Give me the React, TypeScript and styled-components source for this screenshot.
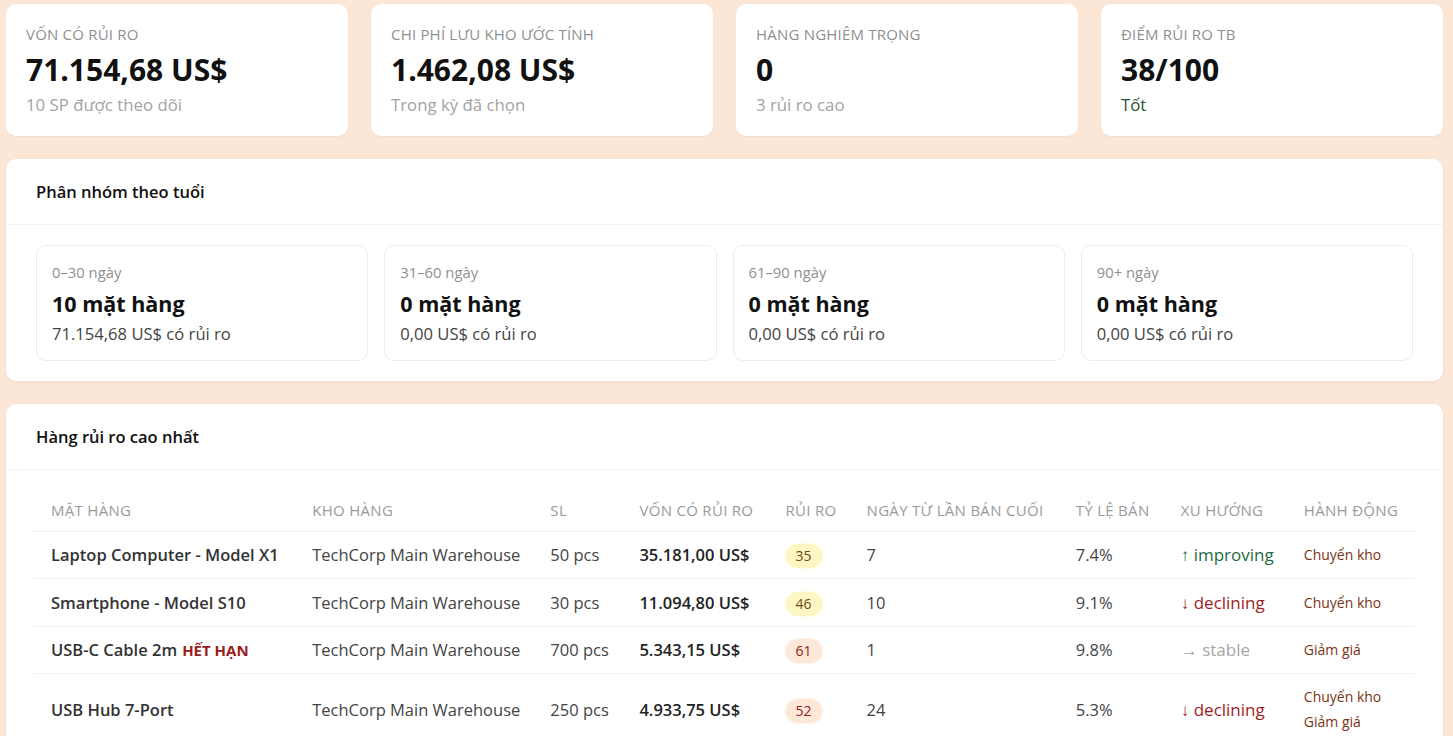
import React from 'react'
import styled, { createGlobalStyle } from 'styled-components'

const GlobalStyle = createGlobalStyle`
  html, body {
    margin: 0;
    padding: 0;
    background: #fce6d6;
  }
  body {
    font-family: 'Open Sans', 'Noto Sans', Arial, sans-serif;
    color: #222;
    overflow: hidden;
  }
`

const Page = styled.div`
  display: flex;
  flex-direction: column;
  gap: 23px;
  padding: 4px 10px 0 6px;
  box-sizing: border-box;
  width: 1453px;
`

const KpiGrid = styled.div`
  display: grid;
  grid-template-columns: repeat(4, 1fr);
  gap: 23px;
`

const KpiCard = styled.div`
  background: #fff;
  border-radius: 10px;
  padding: 20px 20px 19px;
  box-shadow: 0 1px 2px rgba(120, 70, 30, 0.06);
`

const KpiLabel = styled.div`
  font-size: 15px;
  line-height: 20px;
  letter-spacing: 0.2px;
  color: #8f8f8f;
  text-transform: uppercase;
`

const KpiValue = styled.div`
  font-size: 30px;
  line-height: 36px;
  font-weight: 700;
  color: #111;
  margin-top: 8px;
`

const KpiSub = styled.div<{ $tone?: 'good' }>`
  font-size: 16.8px;
  line-height: 24px;
  margin-top: 5px;
  color: ${(p) => (p.$tone === 'good' ? '#1f5130' : '#a3a3a3')};
`

const Section = styled.section`
  background: #fff;
  border-radius: 10px;
  box-shadow: 0 1px 3px rgba(120, 70, 30, 0.08);
`

const SectionHeader = styled.div`
  height: 65px;
  display: flex;
  align-items: center;
  padding: 0 30px;
  border-bottom: 1px solid #f3f3f3;
`

const SectionTitle = styled.h2`
  margin: 0;
  font-size: 16.5px;
  font-weight: 600;
  color: #111;
`

const SectionBody = styled.div`
  padding: 20px 30px 20px;
`

const AgingGrid = styled.div`
  display: grid;
  grid-template-columns: repeat(4, 1fr);
  gap: 16px;
`

const AgingCard = styled.div`
  border: 1px solid #ececec;
  border-radius: 10px;
  padding: 16px 15px 15px;
`

const AgingLabel = styled.div`
  font-size: 14.8px;
  line-height: 20px;
  color: #8f8f8f;
`

const AgingValue = styled.div`
  font-size: 21.5px;
  line-height: 30px;
  font-weight: 700;
  color: #111;
  margin-top: 7px;
`

const AgingSub = styled.div`
  font-size: 16.6px;
  line-height: 22px;
  color: #444;
  margin-top: 4px;
`

const TableBody = styled.div`
  padding: 20px 28px 0 28px;
`

const Table = styled.table`
  width: 100%;
  border-collapse: collapse;
  table-layout: fixed;
`

const Th = styled.th`
  text-align: left;
  font-size: 15px;
  font-weight: 500;
  color: #9a9a9a;
  text-transform: uppercase;
  letter-spacing: 0.3px;
  padding: 10px 17px;
  height: 41px;
  box-sizing: border-box;
  border-bottom: 1px solid #f0f0f0;
  white-space: nowrap;
`

const Td = styled.td<{ $strong?: boolean }>`
  font-size: 16.5px;
  line-height: 25px;
  padding: 10px 17px;
  color: ${(p) => (p.$strong ? '#222' : '#444')};
  font-weight: ${(p) => (p.$strong ? 600 : 400)};
  border-bottom: 1px solid #f0f0f0;
  white-space: nowrap;
  vertical-align: middle;
`

const ItemName = styled.span`
  font-weight: 600;
  color: #333;
`

const Expired = styled.span`
  margin-left: 5px;
  font-size: 15px;
  font-weight: 700;
  color: #9b1c1c;
`

const RiskBadge = styled.span<{ $level: 'mid' | 'high' }>`
  display: inline-block;
  min-width: 36px;
  height: 24px;
  line-height: 24px;
  vertical-align: middle;
  text-align: center;
  border-radius: 12px;
  font-size: 14px;
  font-weight: 500;
  background: ${(p) => (p.$level === 'mid' ? '#fef7c3' : '#fde7d6')};
  color: ${(p) => (p.$level === 'mid' ? '#6b4a0f' : '#8f1d1d')};
  box-shadow: 0 0 3px ${(p) => (p.$level === 'mid' ? '#fef7c3' : '#fde7d6')};
`

const Trend = styled.span<{ $dir: 'improving' | 'declining' | 'stable' }>`
  font-size: 17px;
  color: ${(p) =>
    p.$dir === 'improving' ? '#1c6b43' : p.$dir === 'declining' ? '#a11d1d' : '#a6a6a6'};
`

const ActionList = styled.div`
  display: flex;
  flex-direction: column;
`

const ActionLink = styled.span`
  font-size: 14px;
  line-height: 25px;
  color: #7a3312;
`

type KpiType = { label: string; value: string; sub: string; tone?: 'good' }

const kpis: KpiType[] = [
  { label: 'Vốn có rủi ro', value: '71.154,68 US$', sub: '10 SP được theo dõi' },
  { label: 'Chi phí lưu kho ước tính', value: '1.462,08 US$', sub: 'Trong kỳ đã chọn' },
  { label: 'Hàng nghiêm trọng', value: '0', sub: '3 rủi ro cao' },
  { label: 'Điểm rủi ro TB', value: '38/100', sub: 'Tốt', tone: 'good' },
]

const buckets = [
  { label: '0–30 ngày', count: '10 mặt hàng', value: '71.154,68 US$ có rủi ro' },
  { label: '31–60 ngày', count: '0 mặt hàng', value: '0,00 US$ có rủi ro' },
  { label: '61–90 ngày', count: '0 mặt hàng', value: '0,00 US$ có rủi ro' },
  { label: '90+ ngày', count: '0 mặt hàng', value: '0,00 US$ có rủi ro' },
]

type RowType = {
  name: string
  expired?: boolean
  qty: string
  capital: string
  risk: number
  days: string
  rate: string
  trend: 'improving' | 'declining' | 'stable'
  actions: string[]
}

const rows: RowType[] = [
  { name: 'Laptop Computer - Model X1', qty: '50 pcs', capital: '35.181,00 US$', risk: 35, days: '7', rate: '7.4%', trend: 'improving', actions: ['Chuyển kho'] },
  { name: 'Smartphone - Model S10', qty: '30 pcs', capital: '11.094,80 US$', risk: 46, days: '10', rate: '9.1%', trend: 'declining', actions: ['Chuyển kho'] },
  { name: 'USB-C Cable 2m', expired: true, qty: '700 pcs', capital: '5.343,15 US$', risk: 61, days: '1', rate: '9.8%', trend: 'stable', actions: ['Giảm giá'] },
  { name: 'USB Hub 7-Port', qty: '250 pcs', capital: '4.933,75 US$', risk: 52, days: '24', rate: '5.3%', trend: 'declining', actions: ['Chuyển kho', 'Giảm giá'] },
]

const trendArrow = { improving: '↑', declining: '↓', stable: '→' }

const colWidths = [261, 238, 89, 146, 81, 209, 105, 123, 128]
const headers = ['Mặt hàng', 'Kho hàng', 'SL', 'Vốn có rủi ro', 'Rủi ro', 'Ngày từ lần bán cuối', 'Tỷ lệ bán', 'Xu hướng', 'Hành động']

const App = () => {
  return (
    <>
      <GlobalStyle />
      <Page>
        <KpiGrid>
          {kpis.map((k) => (
            <KpiCard key={k.label}>
              <KpiLabel>{k.label}</KpiLabel>
              <KpiValue>{k.value}</KpiValue>
              <KpiSub $tone={k.tone}>{k.sub}</KpiSub>
            </KpiCard>
          ))}
        </KpiGrid>

        <Section>
          <SectionHeader>
            <SectionTitle>Phân nhóm theo tuổi</SectionTitle>
          </SectionHeader>
          <SectionBody>
            <AgingGrid>
              {buckets.map((b) => (
                <AgingCard key={b.label}>
                  <AgingLabel>{b.label}</AgingLabel>
                  <AgingValue>{b.count}</AgingValue>
                  <AgingSub>{b.value}</AgingSub>
                </AgingCard>
              ))}
            </AgingGrid>
          </SectionBody>
        </Section>

        <Section>
          <SectionHeader>
            <SectionTitle>Hàng rủi ro cao nhất</SectionTitle>
          </SectionHeader>
          <TableBody>
            <Table>
              <colgroup>
                {colWidths.map((w, i) => (
                  <col key={i} style={{ width: w }} />
                ))}
              </colgroup>
              <thead>
                <tr>
                  {headers.map((h) => (
                    <Th key={h}>{h}</Th>
                  ))}
                </tr>
              </thead>
              <tbody>
                {rows.map((r) => (
                  <tr key={r.name}>
                    <Td>
                      <ItemName>{r.name}</ItemName>
                      {r.expired && <Expired>HẾT HẠN</Expired>}
                    </Td>
                    <Td>TechCorp Main Warehouse</Td>
                    <Td>{r.qty}</Td>
                    <Td $strong>{r.capital}</Td>
                    <Td>
                      <RiskBadge $level={r.risk > 50 ? 'high' : 'mid'}>{r.risk}</RiskBadge>
                    </Td>
                    <Td>{r.days}</Td>
                    <Td>{r.rate}</Td>
                    <Td>
                      <Trend $dir={r.trend}>
                        {trendArrow[r.trend]} {r.trend}
                      </Trend>
                    </Td>
                    <Td>
                      <ActionList>
                        {r.actions.map((a) => (
                          <ActionLink key={a}>{a}</ActionLink>
                        ))}
                      </ActionList>
                    </Td>
                  </tr>
                ))}
              </tbody>
            </Table>
          </TableBody>
        </Section>
      </Page>
    </>
  )
}

export default App
